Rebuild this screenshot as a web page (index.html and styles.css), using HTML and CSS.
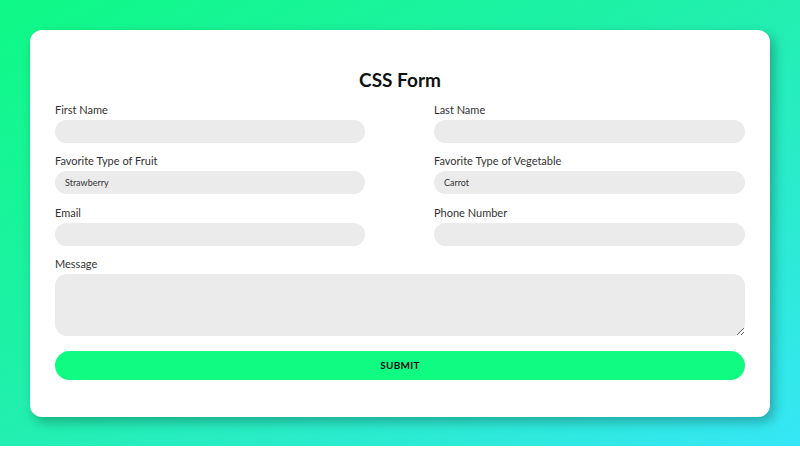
FILE: index.html
```html
<!DOCTYPE html>
<html>
<head>
<meta charset="utf-8">
<link rel="stylesheet" href="styles.css">
</head>
<body>
<div class="page">
  <form class="card">
    <h1 class="title">CSS Form</h1>
    <div class="grid">
      <div class="field">
        <label class="label">First Name</label>
        <input class="input" type="text">
      </div>
      <div class="field">
        <label class="label">Last Name</label>
        <input class="input" type="text">
      </div>
      <div class="field">
        <label class="label">Favorite Type of Fruit</label>
        <input class="input" type="text" value="Strawberry">
      </div>
      <div class="field">
        <label class="label">Favorite Type of Vegetable</label>
        <input class="input" type="text" value="Carrot">
      </div>
      <div class="field">
        <label class="label">Email</label>
        <input class="input" type="text">
      </div>
      <div class="field">
        <label class="label">Phone Number</label>
        <input class="input" type="text">
      </div>
      <div class="field wide">
        <label class="label">Message</label>
        <textarea class="textarea"></textarea>
      </div>
    </div>
    <button class="submit" type="button">SUBMIT</button>
  </form>
</div>
</body>
</html>
```

FILE: styles.css
```css
html, body {
  margin: 0;
  padding: 0;
  background: #ffffff;
}
body {
  font-family: "Lato", "Open Sans", sans-serif;
}
.page {
  height: 446px;
  box-sizing: border-box;
  padding: 30px;
  background: linear-gradient(to bottom right, #0ff986 0%, #22efb0 50%, #36e6f6 100%);
}
.card {
  box-sizing: border-box;
  width: 740px;
  height: 387px;
  background: #ffffff;
  border-radius: 12px;
  box-shadow: 4px 5px 12px rgba(0, 0, 0, 0.28);
  padding: 40px 25px 37px;
  display: flex;
  flex-direction: column;
}
.title {
  margin: 0 0 13px;
  font-size: 19px;
  line-height: 20px;
  font-weight: 700;
  text-align: center;
  color: #111;
}
.grid {
  display: grid;
  grid-template-columns: 310px 311px;
  column-gap: 69px;
  row-gap: 11.3px;
}
.field {
  display: flex;
  flex-direction: column;
}
.wide {
  grid-column: 1 / 3;
}
.label {
  font-size: 11px;
  line-height: 14px;
  color: #333;
  margin-bottom: 3px;
}
.input, .textarea {
  box-sizing: border-box;
  border: none;
  outline: none;
  background: #ebebeb;
  font-family: inherit;
  font-size: 9px;
  color: #333;
  padding: 0 10px;
  margin: 0;
}
.input {
  height: 23px;
  border-radius: 12px;
}
.textarea {
  height: 62px;
  border-radius: 12px;
  padding: 8px 10px;
  resize: vertical;
}
.submit {
  margin-top: 15px;
  height: 29px;
  border: none;
  border-radius: 15px;
  background: #10fb82;
  font-family: inherit;
  font-size: 10px;
  font-weight: 700;
  letter-spacing: 0.3px;
  color: #111;
  padding: 0;
}
```
